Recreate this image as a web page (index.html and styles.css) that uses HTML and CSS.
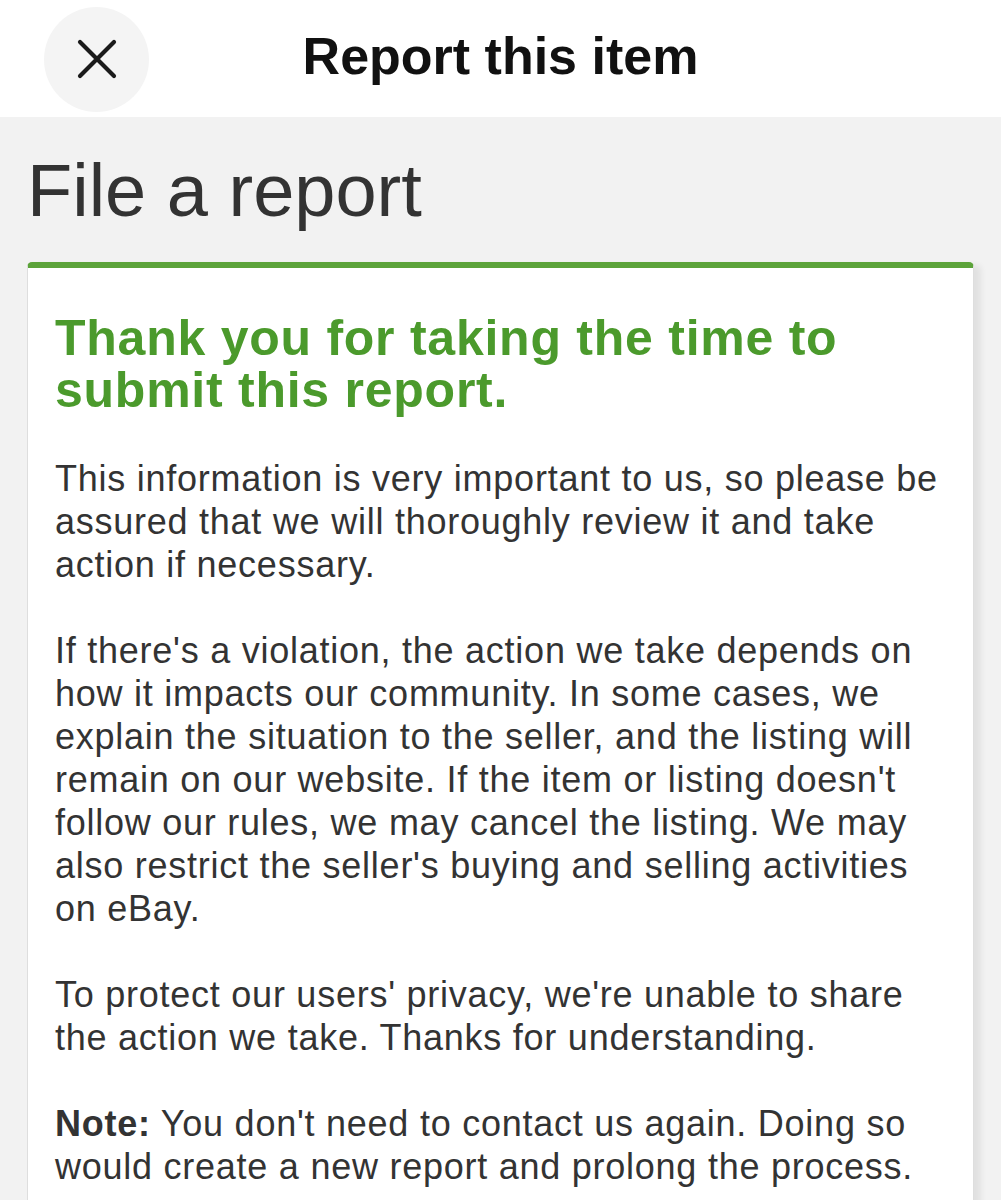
FILE: index.html
```html
<!DOCTYPE html>
<html lang="en">
<head>
<meta charset="utf-8">
<title>Report this item</title>
<link rel="stylesheet" href="styles.css">
</head>
<body>
<header class="topbar">
  <div class="topbar-left">
    <button class="close-btn" aria-label="Close">
      <svg width="40" height="40" viewBox="0 0 40 40" aria-hidden="true">
        <path d="M3 3 L37 37 M37 3 L3 37" stroke="#1a1a1a" stroke-width="4.2" stroke-linecap="round" fill="none"/>
      </svg>
    </button>
  </div>
  <h1 class="topbar-title">Report this item</h1>
  <div class="topbar-right"></div>
</header>
<main class="page">
  <h2 class="page-title">File a report</h2>
  <section class="card">
    <h3 class="card-heading">Thank you for taking the time to<br>submit this report.</h3>
    <p class="card-text">This information is very important to us, so please be<br>assured that we will thoroughly review it and take<br>action if necessary.</p>
    <p class="card-text">If there's a violation, the action we take depends on<br>how it impacts our community. In some cases, we<br>explain the situation to the seller, and the listing will<br>remain on our website. If the item or listing doesn't<br>follow our rules, we may cancel the listing. We may<br>also restrict the seller's buying and selling activities<br>on eBay.</p>
    <p class="card-text">To protect our users' privacy, we're unable to share<br>the action we take. Thanks for understanding.</p>
    <p class="card-text"><strong>Note:</strong> You don't need to contact us again. Doing so<br>would create a new report and prolong the process.</p>
  </section>
</main>
</body>
</html>
```

FILE: styles.css
```css
html, body {
  margin: 0;
  padding: 0;
}

body {
  background: #f2f2f2;
  font-family: "Liberation Sans", Arial, Helvetica, sans-serif;
  color: #333333;
}

.topbar {
  height: 117px;
  background: #ffffff;
  display: grid;
  grid-template-columns: 1fr auto 1fr;
  align-items: center;
}

.topbar-left {
  padding-left: 44px;
  display: flex;
  align-items: center;
}

.close-btn {
  width: 105px;
  height: 105px;
  border-radius: 50%;
  border: none;
  background: #f4f4f4;
  display: flex;
  align-items: center;
  justify-content: center;
  padding: 0;
  margin-top: 1px;
}

.topbar-title {
  margin: 0;
  padding-bottom: 5px;
  font-size: 52px;
  line-height: 56px;
  font-weight: 700;
  color: #111111;
}

.page {
  padding: 31px 27px 60px 27px;
}

.page-title {
  margin: 0 0 29px 0;
  font-size: 74px;
  line-height: 85px;
  font-weight: 400;
  color: #333333;
}

.card {
  background: #ffffff;
  border: 1px solid #dedede;
  border-top: 6px solid #5ca33a;
  border-radius: 5px 5px 0 0;
  box-shadow: 7px 3px 6px rgba(0, 0, 0, 0.07);
  padding: 44px 27px 40px 27px;
}

.card-heading {
  margin: 0 0 41px 0;
  font-size: 50px;
  line-height: 52px;
  letter-spacing: 0.75px;
  font-weight: 700;
  color: #4b9a2c;
}

.card-text {
  margin: 0 0 43px 0;
  font-size: 36px;
  line-height: 43px;
  letter-spacing: 0.75px;
  white-space: nowrap;
  color: #333333;
}

.card-text strong {
  font-weight: 700;
}
```
